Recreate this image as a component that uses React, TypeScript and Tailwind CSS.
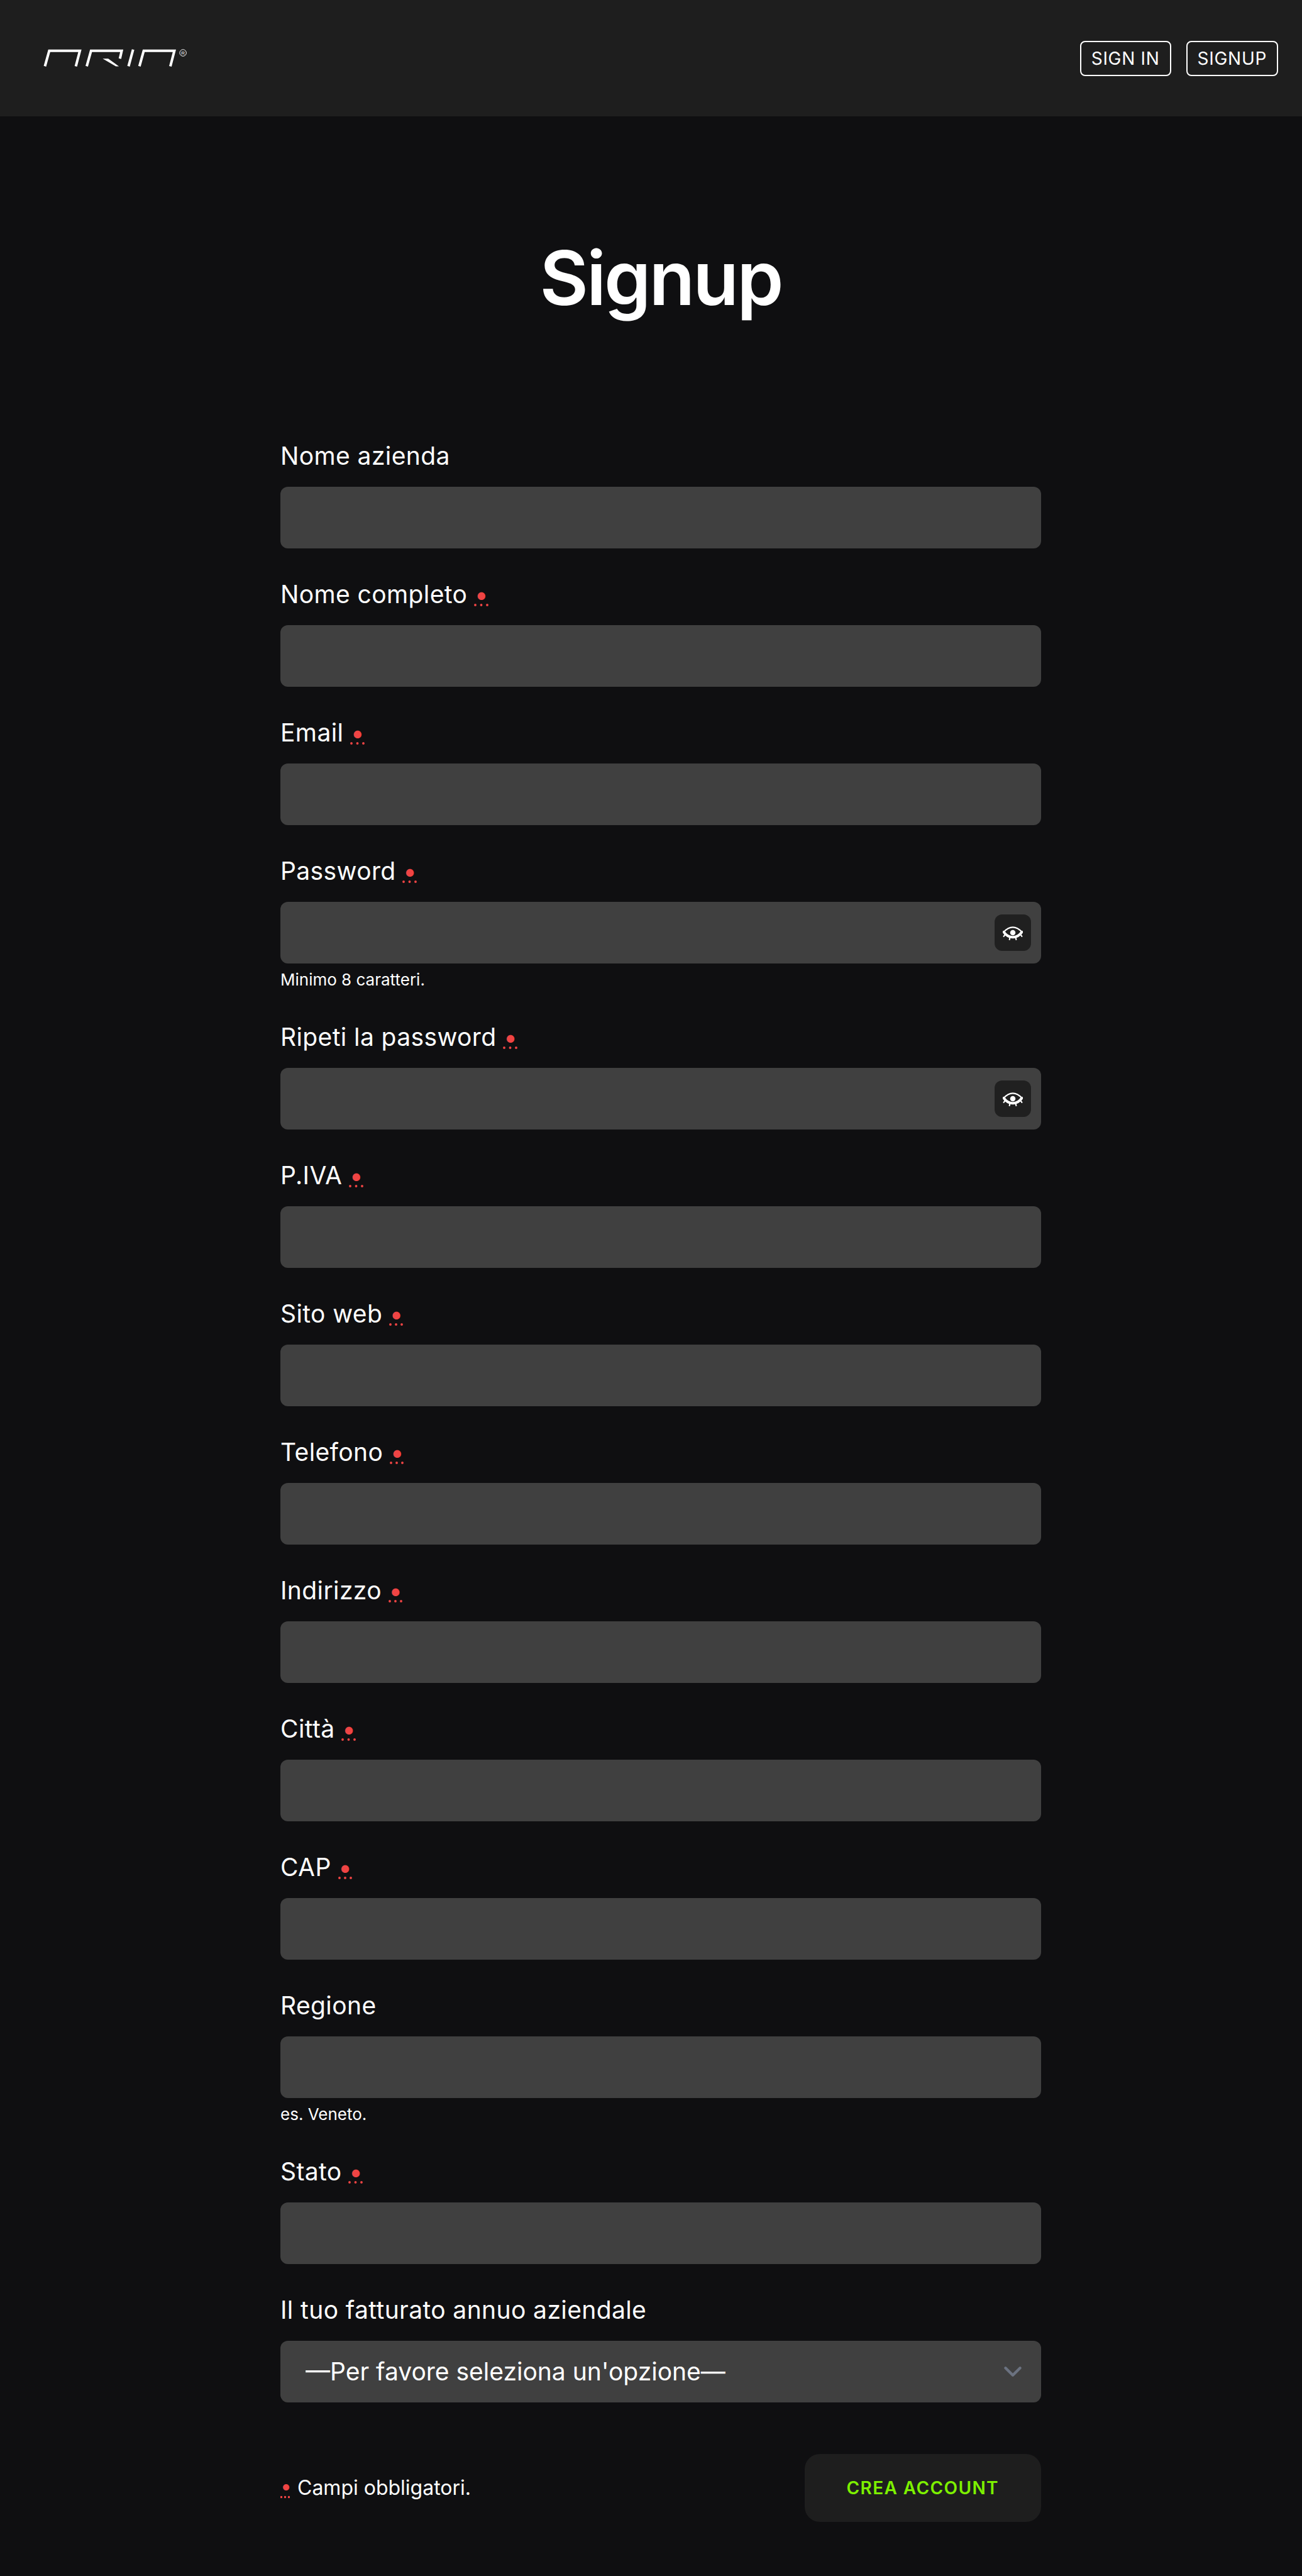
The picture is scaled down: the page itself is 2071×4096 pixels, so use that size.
import { useState } from "react";

type Field = {
  id: string;
  label: string;
  type?: string;
  required?: boolean;
  help?: string;
};

const fields: Field[] = [
  { id: "company", label: "Nome azienda" },
  { id: "name", label: "Nome completo", required: true },
  { id: "email", label: "Email", type: "email", required: true },
  { id: "password", label: "Password", type: "password", required: true, help: "Minimo 8 caratteri." },
  { id: "password_repeat", label: "Ripeti la password", type: "password", required: true },
  { id: "vat", label: "P.IVA", required: true },
  { id: "website", label: "Sito web", required: true },
  { id: "phone", label: "Telefono", type: "tel", required: true },
  { id: "address", label: "Indirizzo", required: true },
  { id: "city", label: "Città", required: true },
  { id: "zip", label: "CAP", required: true },
  { id: "region", label: "Regione", help: "es. Veneto." },
  { id: "state", label: "Stato", required: true },
];

const Logo = () => (
  <svg viewBox="0 0 284 36" className="w-[229px]" fill="none" stroke="white" strokeWidth="5">
    <path d="M3 34L11.500 3.500H72L64 34" />
    <path d="M85.500 34L94 3.500H154.500L151 19" />
    <path d="M117 19H128L149 34H143Z" fill="white" stroke="none" />
    <path d="M168 34L177 1" />
    <path d="M189.500 34L198 3.500H258.500L250.500 34" />
    <circle cx="275.500" cy="7.500" r="6.500" strokeWidth="1.200" />
    <text
      x="275.500"
      y="11.200"
      textAnchor="middle"
      fontSize="10"
      fontFamily="Liberation Sans, sans-serif"
      fill="white"
      stroke="none"
    >
      R
    </text>
  </svg>
);

const EyeIcon = () => (
  <svg viewBox="0 0 120 120" className="w-8 h-8" fill="none" stroke="white" strokeWidth="8" strokeLinecap="round">
    <path d="M6 56C40 18 80 18 114 56" />
    <path d="M6 56C36 98 84 98 114 56" strokeWidth="15" />
    <path d="M12 74L6 82M42 92L40 101M78 92L80 101M108 74L114 82" />
    <circle cx="60" cy="60" r="16" fill="white" stroke="none" />
  </svg>
);

const Required = () => (
  <abbr title="obbligatorio" className="text-[#ef4444]">
    •
  </abbr>
);

const FormField = ({ id, label, type = "text", required, help }: Field) => {
  const [visible, setVisible] = useState(false);
  const isPassword = type === "password";

  return (
    <div>
      <label htmlFor={id} className="block mb-5 text-[39px] leading-[58px] tracking-[0.01em]">
        {label} {required && <Required />}
      </label>
      <div className="relative">
        <input
          id={id}
          name={id}
          type={isPassword && visible ? "text" : type}
          required={required}
          className="block w-full h-[98px] px-10 rounded-xl bg-[#404040] text-[39px]"
        />
        {isPassword && (
          <button
            type="button"
            aria-label="Mostra password"
            onClick={() => setVisible(!visible)}
            className="absolute right-4 top-5 flex items-center justify-center w-[58px] h-[58px] rounded-xl bg-[#202020]"
          >
            <EyeIcon />
          </button>
        )}
      </div>
      {help && <p className="mt-2 text-[26px] leading-9">{help}</p>}
    </div>
  );
};

const App = () => {
  return (
    <div className="min-h-screen bg-[#0f0f11] text-white font-['Inter',sans-serif]">
      <header className="flex items-center justify-between h-[185px] pl-[69px] pr-[38px] bg-[#1e1e1e]">
        <a href="#" aria-label="Home">
          <Logo />
        </a>
        <nav className="flex gap-6 text-[28px] leading-9 tracking-wide">
          <a href="#signin" className="px-4 py-2 border-2 border-white rounded-lg">
            SIGN IN
          </a>
          <a href="#signup" className="px-4 py-2 border-2 border-white rounded-lg">
            SIGNUP
          </a>
        </nav>
      </header>

      <main className="pl-[31px] pb-[87px]">
        <div className="max-w-[1210px] mx-auto">
          <h1 className="pt-[185px] pb-[182px] text-center text-[119px] leading-[144px] font-semibold tracking-tight">
            Signup
          </h1>

          <form onSubmit={(e) => e.preventDefault()}>
            <div className="flex flex-col gap-11">
              {fields.map((field) => (
                <FormField key={field.id} {...field} />
              ))}

              <div>
                <label htmlFor="revenue" className="block mb-5 text-[39px] leading-[58px] tracking-[0.01em]">
                  Il tuo fatturato annuo aziendale
                </label>
                <div className="relative">
                  <select
                    id="revenue"
                    name="revenue"
                    className="block w-full h-[98px] px-10 rounded-xl bg-[#404040] text-[39px] appearance-none"
                  >
                    <option value="">—Per favore seleziona un'opzione—</option>
                  </select>
                  <svg
                    viewBox="0 0 20 20"
                    className="absolute right-4 top-5 w-[58px] h-[58px] pointer-events-none"
                    fill="none"
                    stroke="#6b7280"
                    strokeWidth="1.5"
                    strokeLinecap="round"
                    strokeLinejoin="round"
                  >
                    <path d="M6 8l4 4 4-4" />
                  </svg>
                </div>
              </div>
            </div>

            <div className="flex items-center justify-between mt-[82px]">
              <p className="text-[32px] leading-[48px]">
                <Required /> Campi obbligatori.
              </p>
              <button
                type="submit"
                className="h-[108px] px-[67px] rounded-3xl bg-[#1e1e1e] text-[28px] font-semibold tracking-wider text-[#7df000]"
              >
                CREA ACCOUNT
              </button>
            </div>
          </form>
        </div>
      </main>
    </div>
  );
};

export default App;
